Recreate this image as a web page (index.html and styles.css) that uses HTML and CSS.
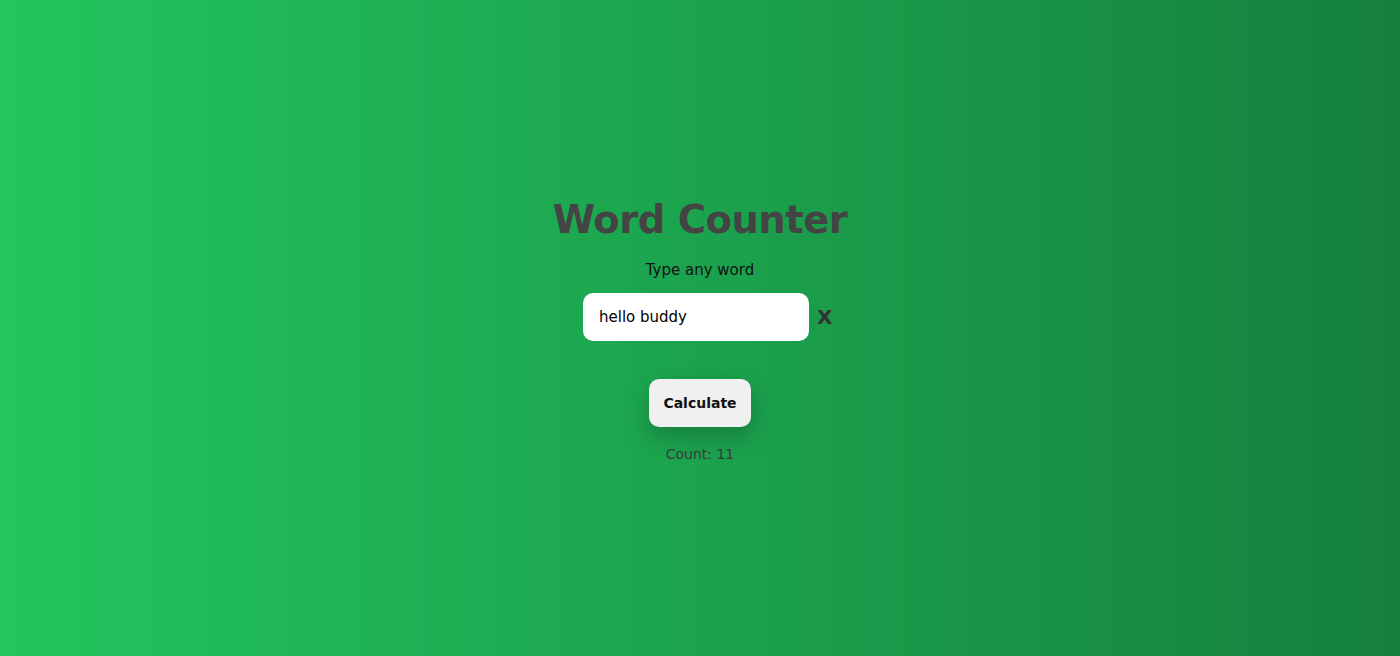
FILE: index.html
```html
<!DOCTYPE html>
<html lang="en">
<head>
<meta charset="utf-8">
<title>Word Counter</title>
<link rel="stylesheet" href="styles.css">
</head>
<body>
<main class="app">
  <h1 class="title">Word Counter</h1>
  <p class="label">Type any word</p>
  <div class="field-row">
    <input class="field" type="text" value="hello buddy">
    <button class="clear" type="button">X</button>
  </div>
  <button class="calc" type="button">Calculate</button>
  <p class="count">Count: 11</p>
</main>
</body>
</html>
```

FILE: styles.css
```css
* { box-sizing: border-box; }
html, body { margin: 0; padding: 0; height: 100%; }
body {
  background: linear-gradient(to right, #22c55e, #15803d);
  font-family: "DejaVu Sans", "Noto Sans", sans-serif;
  overflow: hidden;
}
.app {
  height: 656px;
  display: flex;
  flex-direction: column;
  align-items: center;
  justify-content: center;
  padding-top: 3px;
}
.title {
  margin: 0;
  font-size: 38.5px;
  font-weight: 700;
  color: #444444;
  line-height: 48px;
  letter-spacing: -0.5px;
}
.label {
  margin: 17px 0 0;
  font-size: 15px;
  color: #111;
  line-height: 18px;
}
.field-row {
  display: flex;
  align-items: center;
  gap: 8px;
  margin-top: 14px;
  margin-left: 22px;
}
.field {
  width: 226px;
  height: 48px;
  border: none;
  border-radius: 10px;
  background: #fff;
  padding: 0 16px;
  font-family: inherit;
  font-size: 15px;
  font-weight: 500;
  color: #000;
  outline: none;
}
.clear {
  background: none;
  border: none;
  padding: 0;
  font-family: inherit;
  font-size: 20px;
  font-weight: 700;
  color: #333;
  width: 22px;
  text-align: left;
}
.calc {
  margin-top: 38px;
  width: 102px;
  height: 48px;
  border: none;
  border-radius: 10px;
  background: #f0f0f0;
  font-family: inherit;
  font-size: 14px;
  font-weight: 700;
  color: #111;
  box-shadow: 0 10px 25px rgba(0, 0, 0, 0.22);
}
.count {
  margin: 18px 0 0;
  font-size: 14px;
  color: #3a3a3a;
  line-height: 18px;
}
```
